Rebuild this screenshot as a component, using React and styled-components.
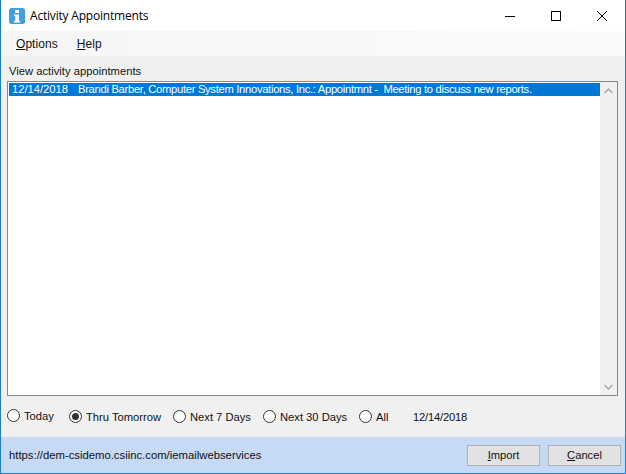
import React from 'react';
import styled, { createGlobalStyle } from 'styled-components';

const Global = createGlobalStyle`
  html, body { margin: 0; padding: 0; background: #fff; }
  #root { width: 626px; height: 474px; }
`;

const Window = styled.div`
  box-sizing: border-box;
  width: 626px;
  height: 474px;
  display: flex;
  flex-direction: column;
  border: 1px solid #1b7fd0;
  border-top: 0;
  background: #f0f0f0;
  font-family: "Liberation Sans", Arial, sans-serif;
  font-size: 11.2px;
  color: #111;
  overflow: hidden;
`;

const TitleBar = styled.div`
  height: 31px;
  flex: none;
  display: flex;
  align-items: center;
  background: #fff;
  padding-left: 8px;
`;

const AppIcon = styled.svg`
  width: 16px;
  height: 16px;
  flex: none;
`;

const Title = styled.div`
  margin-left: 5px;
  flex: 1;
  font-family: "Open Sans", "Noto Sans", sans-serif;
  font-size: 12px;
  color: #000;
  letter-spacing: -0.2px;
`;

const WinButton = styled.div`
  width: 46px;
  height: 31px;
  display: flex;
  align-items: center;
  justify-content: center;
`;

const MenuBar = styled.div`
  height: 25px;
  flex: none;
  display: flex;
  align-items: center;
  padding-left: 15px;
  gap: 19px;
  background: linear-gradient(to right, #f6f6f6, #fbfbfb);
  font-size: 12px;
`;

const MenuItem = styled.span`
  color: #111;
  letter-spacing: 0.05px;
  u { text-underline-offset: 1px; }
`;

const Body = styled.div`
  flex: 1;
  display: flex;
  flex-direction: column;
  padding: 8px 7px 0 6px;
  min-height: 0;
`;

const Label = styled.div`
  height: 17px;
  line-height: 14px;
  flex: none;
  padding-left: 2px;
  letter-spacing: 0.02px;
`;

const ListFrame = styled.div`
  height: 315px;
  flex: none;
  display: flex;
  border: 1px solid #828790;
  background: #fff;
  box-sizing: border-box;
`;

const List = styled.div`
  flex: 1;
  padding: 1px 0 0 1px;
`;

const Row = styled.div`
  height: 13px;
  line-height: 13px;
  background: #0078d7;
  color: #fff;
  white-space: pre;
  padding-left: 3px;
`;

const RowDetail = styled.span`
  margin-left: 10px;
  letter-spacing: -0.29px;
`;

const Scrollbar = styled.div`
  width: 17px;
  flex: none;
  display: flex;
  flex-direction: column;
  justify-content: space-between;
  background: #f0f0f0;
`;

const ScrollArrow = styled.div`
  height: 17px;
  display: flex;
  align-items: center;
  justify-content: center;
`;

const Options = styled.div`
  height: 40px;
  flex: none;
  display: flex;
  align-items: center;
  color: #111;
`;

const RadioItem = styled.label`
  display: flex;
  flex: none;
  align-items: center;
  gap: 4px;
  width: ${p => p.$width}px;
  margin-bottom: ${p => (p.$raised ? 1 : 0)}px;
  margin-top: ${p => (p.$raised ? 0 : 1)}px;
`;

const RadioDot = styled.span`
  box-sizing: border-box;
  width: 13px;
  height: 13px;
  flex: none;
  border-radius: 50%;
  border: 1px solid #333;
  background: #fff;
  display: flex;
  align-items: center;
  justify-content: center;
  &::after {
    content: "";
    width: 7px;
    height: 7px;
    border-radius: 50%;
    background: ${p => (p.$checked ? '#333' : 'transparent')};
  }
`;

const DateText = styled.span`
  margin-top: 1px;
  letter-spacing: -0.2px;
`;

const Footer = styled.div`
  height: 36px;
  flex: none;
  display: flex;
  align-items: center;
  background: #c6daf6;
  padding: 0 4px 0 8px;
`;

const Url = styled.div`
  flex: 1;
  color: #111;
  font-size: 11.3px;
`;

const Button = styled.div`
  box-sizing: border-box;
  width: 73px;
  height: 21px;
  margin-left: 8px;
  display: flex;
  align-items: center;
  justify-content: center;
  background: #e1e1e1;
  border: 1px solid #adadad;
  box-shadow: inset 0 0 0 1px #e8e8e8;
`;

const radios = [
  ['Today', 62, false, true],
  ['Thru Tomorrow', 104, true, false],
  ['Next 7 Days', 90, false, false],
  ['Next 30 Days', 96, false, false],
  ['All', 54, false, false],
];

export default function App() {
  return (
    <Window>
      <Global />
      <TitleBar>
        <AppIcon viewBox="0 0 16 16">
          <rect x="0" y="0" width="16" height="16" rx="2.5" fill="#45a0da" />
          <rect x="6" y="2" width="4" height="3" fill="#fff" />
          <path d="M5 6.5h5v6.5h1.2v1.5H5V13h1.3V8H5z" fill="#fff" />
        </AppIcon>
        <Title>Activity Appointments</Title>
        <WinButton>
          <svg width="10" height="10" viewBox="0 0 10 10"><path d="M0 5.5h10" stroke="#000" fill="none" /></svg>
        </WinButton>
        <WinButton>
          <svg width="10" height="10" viewBox="0 0 10 10"><rect x=".5" y=".5" width="9" height="9" stroke="#000" fill="none" /></svg>
        </WinButton>
        <WinButton>
          <svg width="10" height="10" viewBox="0 0 10 10"><path d="M0 0l10 10M10 0L0 10" stroke="#000" fill="none" /></svg>
        </WinButton>
      </TitleBar>
      <MenuBar>
        <MenuItem><u>O</u>ptions</MenuItem>
        <MenuItem><u>H</u>elp</MenuItem>
      </MenuBar>
      <Body>
        <Label>View activity appointments</Label>
        <ListFrame>
          <List>
            <Row>12/14/2018<RowDetail>{'Brandi Barber, Computer System Innovations, Inc.: Appointmnt -  Meeting to discuss new reports.'}</RowDetail></Row>
          </List>
          <Scrollbar>
            <ScrollArrow>
              <svg width="9" height="6" viewBox="0 0 9 6"><path d="M.5 5l4-4 4 4" stroke="#a6a6a6" strokeWidth="1.5" fill="none" /></svg>
            </ScrollArrow>
            <ScrollArrow>
              <svg width="9" height="6" viewBox="0 0 9 6"><path d="M.5 1l4 4 4-4" stroke="#a6a6a6" strokeWidth="1.5" fill="none" /></svg>
            </ScrollArrow>
          </Scrollbar>
        </ListFrame>
        <Options>
          {radios.map(([label, width, checked, raised]) => (
            <RadioItem key={label} $width={width} $raised={raised}>
              <RadioDot $checked={checked} />
              {label}
            </RadioItem>
          ))}
          <DateText>12/14/2018</DateText>
        </Options>
      </Body>
      <Footer>
        <Url>https://dem-csidemo.csiinc.com/iemailwebservices</Url>
        <Button><span><u>I</u>mport</span></Button>
        <Button><span><u>C</u>ancel</span></Button>
      </Footer>
    </Window>
  );
}
